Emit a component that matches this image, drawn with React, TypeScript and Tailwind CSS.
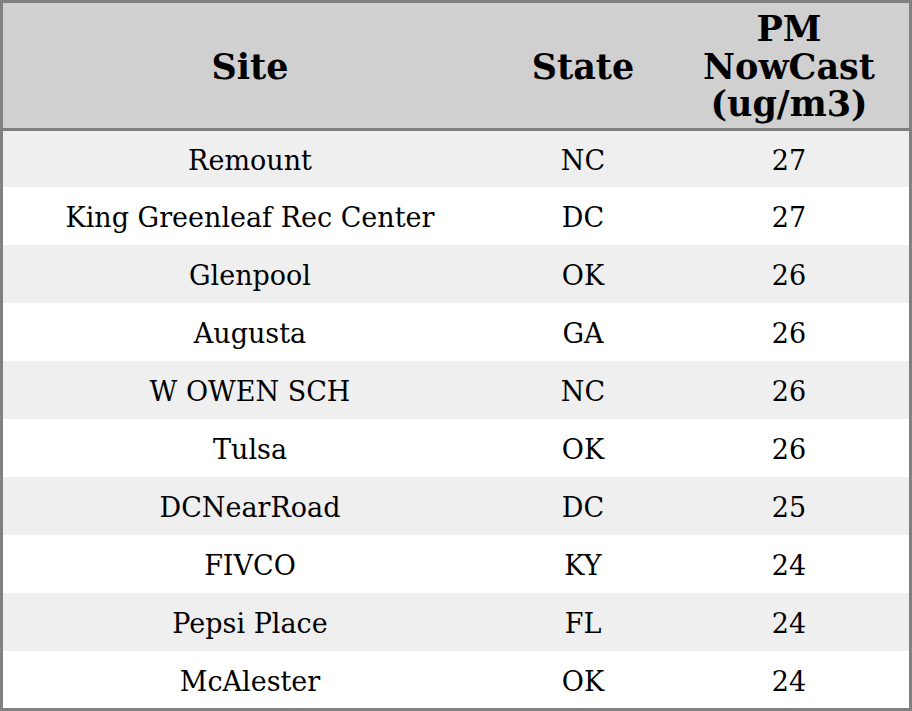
import React from "react";

const rows: [string, string, string][] = [
  ["Remount", "NC", "27"],
  ["King Greenleaf Rec Center", "DC", "27"],
  ["Glenpool", "OK", "26"],
  ["Augusta", "GA", "26"],
  ["W OWEN SCH", "NC", "26"],
  ["Tulsa", "OK", "26"],
  ["DCNearRoad", "DC", "25"],
  ["FIVCO", "KY", "24"],
  ["Pepsi Place", "FL", "24"],
  ["McAlester", "OK", "24"],
];

export default function App() {
  return (
    <div
      className="w-[912px] h-[711px] border-[3px] border-[#808080] bg-white text-black flex flex-col"
      style={{ fontFamily: '"DejaVu Serif", serif' }}
    >
      <div className="h-[128px] shrink-0 bg-[#d0d0d0] border-b-[3px] border-[#808080] flex items-center pt-[2px] text-[35px] font-bold leading-[37.5px]">
        <div className="w-[494px] text-center">Site</div>
        <div className="w-[172px] text-center">State</div>
        <div className="w-[240px] text-center">
          PM
          <br />
          NowCast
          <br />
          (ug/m3)
        </div>
      </div>
      {rows.map((r, i) => (
        <div
          key={i}
          className={`flex items-center pt-[4px] text-[27px] leading-[32px] shrink-0 ${i % 2 === 0 ? "bg-[#efefef]" : "bg-white"} ${i === 0 ? "h-[56px]" : i === 9 ? "h-[57px]" : "h-[58px]"}`}
        >
          <div className="w-[494px] text-center">{r[0]}</div>
          <div className="w-[172px] text-center">{r[1]}</div>
          <div className="w-[240px] text-center">{r[2]}</div>
        </div>
      ))}
    </div>
  );
}
